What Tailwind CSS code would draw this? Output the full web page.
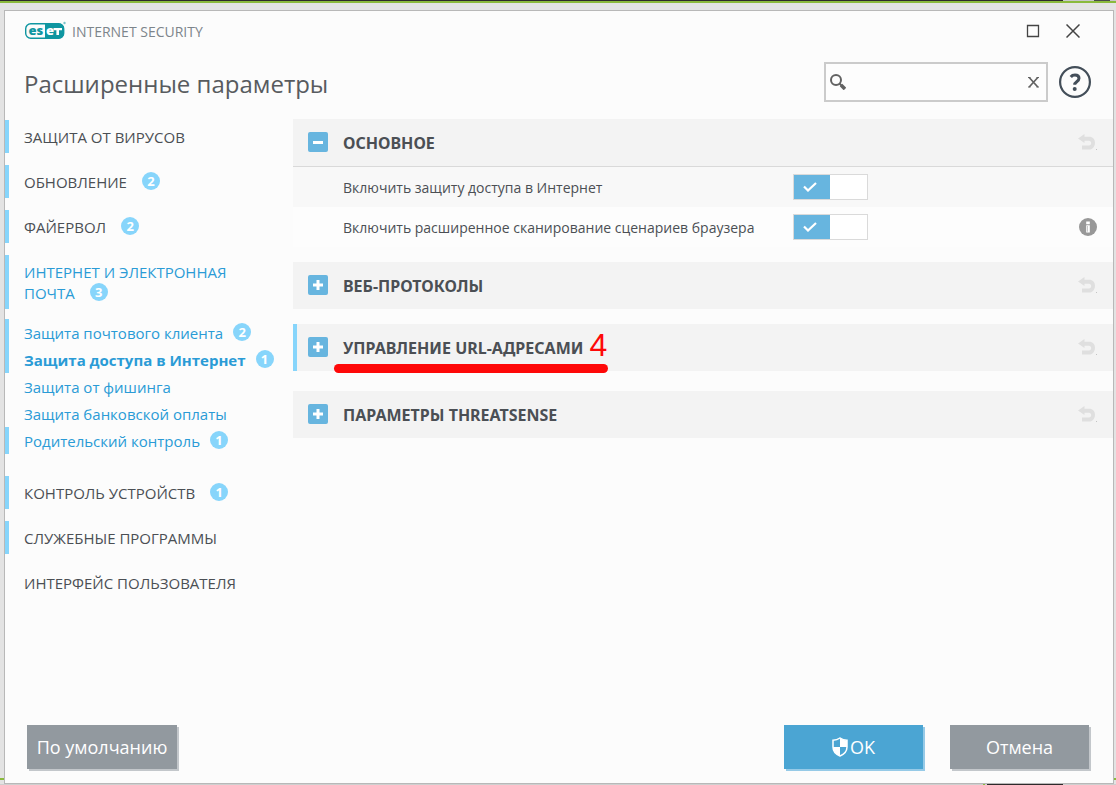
<!DOCTYPE html>
<html lang="ru">
<head>
<meta charset="utf-8">
<title>ESET Internet Security</title>
<script src="https://cdn.jsdelivr.net/npm/@tailwindcss/browser@4"></script>
</head>
<body class="relative flex min-h-screen flex-col bg-[#e3e3e3] font-['Open_Sans','Noto_Sans',sans-serif] text-[#4b4f54]">
<svg class="hidden">
  <symbol id="undo" viewBox="0 0 20 20"><path d="M0 5.500 6.500 1v2.700h4.800c3.400 0 5.700 2.400 5.700 6S14.700 16.500 11.300 16.500H4v-4h7c1.300 0 2.200-.9 2.200-2.400s-.9-2.400-2.200-2.400H6.500V10z" fill="#dfdfdf"/><path d="M18 16h1v1h-1z" fill="#c4c4c4"/></symbol>
  <symbol id="plus" viewBox="0 0 20 20"><rect width="20" height="20" rx="2" fill="#67b5df"/><path d="M5 10h10M10 5v10" stroke="#fff" stroke-width="3"/></symbol>
  <symbol id="minus" viewBox="0 0 20 20"><rect width="20" height="20" rx="2" fill="#67b5df"/><path d="M5 10.500h10" stroke="#fff" stroke-width="3"/></symbol>
  <symbol id="check" viewBox="0 0 14 10"><path d="M1 4.500 5 8.500 13 1" fill="none" stroke="#fff" stroke-width="2.200"/></symbol>
</svg>

<!-- edges of the windows behind the dialog -->
<div class="flex h-px"><span class="flex-1 bg-[#2e2a2b]"></span><span class="w-[31px] bg-[#c9c9c9]"></span><span class="w-[16px] bg-[#4a4a4a]"></span><span class="w-[6px] bg-[#c9c9c9]"></span></div>
<div class="h-[2px] bg-[#8aba3c]"></div>
<span class="absolute bottom-[5px] left-0 h-[2px] w-1 bg-[#8aba3c]"></span>
<span class="absolute right-0 bottom-[5px] h-[2px] w-[2px] bg-[#8aba3c]"></span>

<div class="mx-1 mt-[7px] mr-[2px] flex flex-1 flex-col border border-[#b8b8b8] bg-[#fcfcfc]">
  <header>
    <div class="flex h-10 items-center pr-[33px] pl-5">
      <svg class="h-5 w-[42px]" viewBox="0 0 42 20" role="img" aria-label="ESET">
        <rect x="0.700" y="2.700" width="38" height="14.600" rx="5" fill="#fcfcfc" stroke="#0f96a1" stroke-width="1.400"/>
        <path d="M20 2.500h14a5 5 0 0 1 5 5v5a5 5 0 0 1-5 5H20z" fill="#0f96a1"/>
        <text x="3.500" y="14" font-family="Open Sans" font-weight="800" font-size="13" fill="#0f96a1">es</text>
        <text x="21" y="14" font-family="Open Sans" font-weight="800" font-size="13" fill="#fff">e</text>
        <path d="M28.500 7h8.500v2.300h-3V14h-2.600V9.300h-2.900z" fill="#fff"/>
        <circle cx="39.500" cy="2" r="1.200" fill="#7cc4ca"/>
      </svg>
      <span class="ml-[5px] text-[14px] text-[#7d858b]">INTERNET SECURITY</span>
      <div class="ml-auto flex items-center gap-[26px]">
        <button aria-label="Развернуть"><svg class="block size-[14px]" viewBox="0 0 14 14"><path d="M1.500 1.500h11v11h-11z" fill="none" stroke="#444" stroke-width="1.300"/></svg></button>
        <button aria-label="Закрыть"><svg class="block size-[14px]" viewBox="0 0 14 14"><path d="m.5.5 13 13m0-13-13 13" fill="none" stroke="#444" stroke-width="1.500"/></svg></button>
      </div>
    </div>
    <div class="flex h-[68px] items-start pr-[22px] pl-[19px]">
      <h1 class="pt-4 text-[24px] leading-[34px] font-medium text-[#585b5f]">Расширенные параметры</h1>
      <div class="mt-[11px] ml-auto flex h-10 w-56 items-center border-2 border-[#cbcbcb] bg-[#fdfdfd] pr-[7px] pl-1">
        <svg class="size-4 shrink-0" viewBox="0 0 16 16"><circle cx="6" cy="6" r="5" fill="none" stroke="#626262" stroke-width="2"/><path d="m9.500 9.500 2 2" stroke="#626262" stroke-width="2"/><path d="m11 11 4 4" stroke="#626262" stroke-width="3.600"/></svg>
        <input type="text" aria-label="Поиск" class="h-full min-w-0 flex-1 px-2 text-[15px] outline-none">
        <button aria-label="Очистить"><svg class="block h-3 w-[11px]" viewBox="0 0 11 12"><path d="m1.200 1.500 8.600 9.500m0-9.500L1.200 11" fill="none" stroke="#626262" stroke-width="1.700"/><path d="M0 1.500h2.500m6 0H11M0 11h2.500m6 0H11" stroke="#626262"/></svg></button>
      </div>
      <button aria-label="Справка" class="mt-[15px] ml-[11px]"><svg class="block size-8" viewBox="0 0 32 32"><circle cx="16" cy="16" r="14.900" fill="none" stroke="#434e59" stroke-width="2.200"/><path d="M11.800 11c1-1.300 2.500-1.900 4.200-1.900 2.600 0 4 1.300 4 3.200 0 3.500-4.300 3.300-4.300 6.400" fill="none" stroke="#434e59" stroke-width="3"/><circle cx="15.700" cy="22.900" r="2" fill="#434e59"/></svg></button>
    </div>
  </header>

  <div class="flex flex-1">
    <nav class="w-72 shrink-0 pt-[1px] text-[15px] leading-[21px]">
      <ul class="flex flex-col gap-3">
        <li class="border-l-4 border-[#87d5fb] pt-[7px] pb-[5px] pl-[15px]"><a href="#">ЗАЩИТА ОТ ВИРУСОВ</a></li>
        <li class="border-l-4 border-[#87d5fb] pt-[7px] pb-[5px] pl-[15px]"><a href="#" class="flex items-center">ОБНОВЛЕНИЕ<span class="mb-[3px] ml-[15px] h-[18px] w-[18px] rounded-full bg-[#87d5fb] text-center text-[13px] leading-[18px] font-bold text-white">2</span></a></li>
        <li class="border-l-4 border-[#87d5fb] pt-[7px] pb-[5px] pl-[15px]"><a href="#" class="flex items-center">ФАЙЕРВОЛ<span class="mb-[3px] ml-[15px] h-[18px] w-[18px] rounded-full bg-[#87d5fb] text-center text-[13px] leading-[18px] font-bold text-white">2</span></a></li>
        <li class="border-l-4 border-[#87d5fb] pt-[7px] pb-[5px] pl-[15px] text-[#2a9bd6]"><a href="#">ИНТЕРНЕТ И ЭЛЕКТРОННАЯ<span class="flex items-center">ПОЧТА<span class="mb-[3px] ml-[15px] h-[18px] w-[18px] rounded-full bg-[#87d5fb] text-center text-[13px] leading-[18px] font-bold text-white">3</span></span></a></li>
      </ul>
      <ul class="mt-[10px] mb-[22px] text-[#2a9bd6]">
        <li class="border-l-4 border-[#87d5fb] pt-1 pb-[2px] pl-[15px]"><a href="#" class="flex items-center">Защита почтового клиента<span class="mb-[3px] ml-[10px] h-[18px] w-[18px] rounded-full bg-[#87d5fb] text-center text-[13px] leading-[18px] font-bold text-white">2</span></a></li>
        <li class="border-l-4 border-[#87d5fb] pt-1 pb-[2px] pl-[15px]"><a href="#" class="flex items-center font-bold">Защита доступа в Интернет<span class="mb-[3px] ml-[10px] h-[18px] w-[18px] rounded-full bg-[#87d5fb] text-center text-[13px] leading-[18px] font-bold text-white">1</span></a></li>
        <li class="border-l-4 border-transparent pt-1 pb-[2px] pl-[15px]"><a href="#">Защита от фишинга</a></li>
        <li class="border-l-4 border-transparent pt-1 pb-[2px] pl-[15px]"><a href="#">Защита банковской оплаты</a></li>
        <li class="border-l-4 border-[#87d5fb] pt-1 pb-[2px] pl-[15px]"><a href="#" class="flex items-center">Родительский контроль<span class="mb-[3px] ml-[10px] h-[18px] w-[18px] rounded-full bg-[#87d5fb] text-center text-[13px] leading-[18px] font-bold text-white">1</span></a></li>
      </ul>
      <ul class="flex flex-col gap-3">
        <li class="border-l-4 border-[#87d5fb] pt-[7px] pb-[5px] pl-[15px]"><a href="#" class="flex items-center">КОНТРОЛЬ УСТРОЙСТВ<span class="mb-[3px] ml-[15px] h-[18px] w-[18px] rounded-full bg-[#87d5fb] text-center text-[13px] leading-[18px] font-bold text-white">1</span></a></li>
        <li class="border-l-4 border-[#87d5fb] pt-[7px] pb-[5px] pl-[15px]"><a href="#">СЛУЖЕБНЫЕ ПРОГРАММЫ</a></li>
        <li class="border-l-4 border-transparent pt-[7px] pb-[5px] pl-[15px]"><a href="#">ИНТЕРФЕЙС ПОЛЬЗОВАТЕЛЯ</a></li>
      </ul>
    </nav>

    <main class="min-w-0 flex-1 text-[14px]">
      <section>
        <div class="flex h-12 items-center border-b border-[#d9d9d9] bg-[#f3f3f3] pr-[15px] pl-[15px]">
          <button class="flex items-center gap-[15px] font-['Noto_Sans','Open_Sans',sans-serif] text-[16px] font-bold"><svg class="mb-[2px] size-5"><use href="#minus"/></svg>ОСНОВНОЕ</button>
          <button class="ml-auto" aria-label="Отменить изменения"><svg class="block size-5"><use href="#undo"/></svg></button>
        </div>
        <div class="flex h-10 items-center bg-[#f8f8f8] pr-4 pl-[50px]">
          <label for="web" class="w-[450px]">Включить защиту доступа в Интернет</label>
          <span class="relative block h-[26px] w-[75px] border border-[#dadada] bg-white">
            <input id="web" type="checkbox" checked class="absolute inset-0 size-full appearance-none">
            <span class="pointer-events-none flex h-full w-9 items-center justify-center bg-[#67b5df]"><svg class="mr-1 h-[10px] w-[14px]"><use href="#check"/></svg></span>
          </span>
        </div>
        <div class="mb-[15px] flex h-10 items-center bg-[#fdfdfd] pr-4 pl-[50px]">
          <label for="scripts" class="w-[450px]">Включить расширенное сканирование сценариев браузера</label>
          <span class="relative block h-[26px] w-[75px] border border-[#dadada] bg-white">
            <input id="scripts" type="checkbox" checked class="absolute inset-0 size-full appearance-none">
            <span class="pointer-events-none flex h-full w-9 items-center justify-center bg-[#67b5df]"><svg class="mr-1 h-[10px] w-[14px]"><use href="#check"/></svg></span>
          </span>
          <button class="ml-auto" aria-label="Сведения"><svg class="block size-[18px]" viewBox="0 0 18 18"><circle cx="9" cy="9" r="9" fill="#989898"/><path d="M7.200 3.500h3.600v2.700H7.200zM7.200 7.200h3.600V14.500H7.200z" fill="#fff"/><path d="M8.500 8v5.700" stroke="#c8c8c8"/></svg></button>
        </div>
      </section>
      <section class="mb-[15px] flex h-[47px] items-center bg-[#f3f3f3] px-[15px]">
        <button class="flex items-center gap-[15px] font-['Noto_Sans','Open_Sans',sans-serif] text-[16px] font-bold"><svg class="mb-[2px] size-5"><use href="#plus"/></svg>ВЕБ-ПРОТОКОЛЫ</button>
        <button class="ml-auto" aria-label="Отменить изменения"><svg class="block size-5"><use href="#undo"/></svg></button>
      </section>
      <section class="mb-5 flex h-[47px] items-center border-l-4 border-[#87d5fb] bg-[#f3f3f3] pr-[15px] pl-[11px]">
        <button class="relative flex items-center gap-[15px] font-['Noto_Sans','Open_Sans',sans-serif] text-[16px] font-bold"><svg class="mb-[2px] size-5"><use href="#plus"/></svg>УПРАВЛЕНИЕ URL-АДРЕСАМИ
          <span class="absolute top-full right-[-25px] left-[26px] mt-1 h-[9px] rounded-full bg-[#fe0808]"></span>
          <span class="absolute top-[-9px] left-full ml-[6px] font-['Liberation_Sans'] text-[32px] leading-9 font-normal text-[#fe0808]">4</span>
        </button>
        <button class="ml-auto" aria-label="Отменить изменения"><svg class="block size-5"><use href="#undo"/></svg></button>
      </section>
      <section class="flex h-[47px] items-center bg-[#f3f3f3] px-[15px]">
        <button class="flex items-center gap-[15px] font-['Noto_Sans','Open_Sans',sans-serif] text-[16px] font-bold"><svg class="mb-[2px] size-5"><use href="#plus"/></svg>ПАРАМЕТРЫ THREATSENSE</button>
        <button class="ml-auto" aria-label="Отменить изменения"><svg class="block size-5"><use href="#undo"/></svg></button>
      </section>
    </main>
  </div>

  <footer class="flex items-center pr-6 pb-[14px] pl-[22px] text-[18px] text-white">
    <button class="h-11 w-[150px] bg-[#92999f] shadow-[2px_2px_0_#c3c7cb]">По умолчанию</button>
    <button class="ml-auto flex h-11 w-[139px] items-center justify-center bg-[#4ba5d3] shadow-[2px_2px_0_#96cae7]"><svg class="mr-[2px] h-5 w-4" viewBox="0 0 16 20"><path d="M8 1C6 2.500 3.500 3.300 1 3.300V10c0 4.300 3 7.300 7 9 4-1.700 7-4.700 7-9V3.300C12.500 3.300 10 2.500 8 1z" fill="none" stroke="#fff" stroke-width="1.500"/><path d="M8 1v9h7V3.300C12.500 3.300 10 2.500 8 1zM8 10H1c0 4.300 3 7.300 7 9z" fill="#fff"/></svg>OK</button>
    <button class="ml-[27px] h-11 w-[139px] bg-[#92999f] shadow-[2px_2px_0_#c3c7cb]">Отмена</button>
  </footer>
</div>
<div class="flex h-px justify-end bg-[#cfcfcf]"><span class="w-[2px] bg-[#8aba3c]"></span><span class="mr-[53px] ml-[2px] w-[76px] bg-[#2e2a2b]"></span></div>
</body>
</html>
